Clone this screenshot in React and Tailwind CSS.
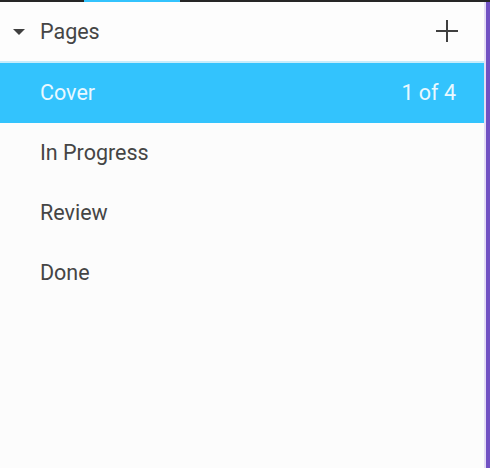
import React from 'react';

const pages = ['Cover', 'In Progress', 'Review', 'Done'];

const App = () => {
  return (
    <div className="w-[490px] h-[468px] flex flex-col bg-[#fcfcfc] overflow-hidden" style={{ fontFamily: 'Roboto, "Noto Sans", sans-serif' }}>
      {/* top strip */}
      <div className="h-[2px] bg-[#262626] flex">
        <div className="ml-[84px] w-[96px] bg-[#33c3fd]" />
      </div>

      <div className="flex flex-1">
        <div className="w-[484px] flex flex-col">
          {/* header */}
          <div className="h-[59px] flex items-center pl-[13px] pr-[26px] bg-[#fdfdfd]">
            <svg width="12" height="6" viewBox="0 0 12 6" className="mt-[1px]">
              <path d="M0 0h12L6 6z" fill="#404040" />
            </svg>
            <span className="ml-[15px] mt-[2px] text-[21.5px] text-[#454545]">Pages</span>
            <svg width="22" height="22" viewBox="0 0 22 22" className="ml-auto -mt-[2px]">
              <path d="M11 0v22M0 11h22" stroke="#404040" strokeWidth="2" />
            </svg>
          </div>
          <div className="h-[2px] bg-[#c6ecfb]" />

          {/* list */}
          {pages.map((p, i) => (
            <div
              key={p}
              className={`h-[60px] flex items-center pl-[40px] pr-[28px] text-[21.5px] ${i === 0 ? 'bg-[#33c3fd] text-[#e9f8ff]' : 'text-[#454545]'}`}
            >
              <span>{p}</span>
              {i === 0 && <span className="ml-auto">1 of 4</span>}
            </div>
          ))}
        </div>
        <div className="w-[2px] bg-[#e4ddf5]" />
        <div className="w-[4px] bg-[#7151c3]" />
      </div>
    </div>
  );
};

export default App;
